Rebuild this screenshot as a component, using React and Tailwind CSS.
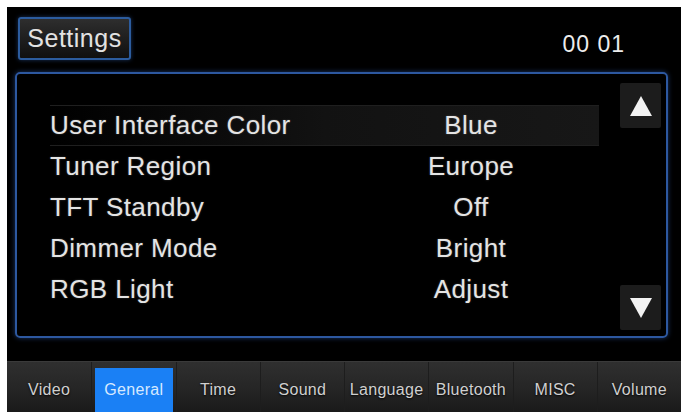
import React from "react";

const FONT = { fontFamily: '"Liberation Sans", Arial, sans-serif' };

const rows = [
  { label: "User Interface Color", value: "Blue", selected: true },
  { label: "Tuner Region", value: "Europe" },
  { label: "TFT Standby", value: "Off" },
  { label: "Dimmer Mode", value: "Bright" },
  { label: "RGB Light", value: "Adjust" },
];

const tabs = ["Video", "General", "Time", "Sound", "Language", "Bluetooth", "MISC", "Volume"];

function ScrollButton({ up }) {
  return (
    <div className="w-[41px] h-[45px] rounded-[2px] bg-[#1c1c1c] flex items-center justify-center">
      <svg width="24" height="22" viewBox="0 0 24 22">
        {up ? (
          <polygon points="12,1 23,21 1,21" fill="#f2f2f2" />
        ) : (
          <polygon points="1,1 23,1 12,21" fill="#f2f2f2" />
        )}
      </svg>
    </div>
  );
}

function SettingRow({ row }) {
  return (
    <div
      className={
        "h-[41px] flex items-center text-[26px] tracking-[0.4px] text-[#e4e4e4] " +
        (row.selected
          ? "bg-gradient-to-r from-transparent via-[#121212] to-[#171717] border-y border-[#1f1f1f]"
          : "")
      }
    >
      <div className="w-[330px] [text-shadow:0_0_2px_rgba(255,255,255,0.25)]">{row.label}</div>
      <div className="w-[182px] text-center [text-shadow:0_0_2px_rgba(255,255,255,0.25)]">{row.value}</div>
    </div>
  );
}

function TabBar({ active }) {
  return (
    <div className="h-[51px] grid grid-cols-8 bg-gradient-to-b from-[#2f2f2f] via-[#262626] to-[#1a1a1a] border-t border-[#3a3a3a]">
      {tabs.map((tab, i) => (
        <div
          key={tab}
          className={
            "flex items-end justify-center pb-0 " + (i > 0 ? "border-l border-[#1d1d1d]" : "")
          }
        >
          {tab === active ? (
            <div className="w-[78px] h-[44px] bg-[#1a80f5] flex items-center justify-center text-[16px] text-[#d6e9ff] tracking-[0.3px]">
              {tab}
            </div>
          ) : (
            <div className="h-[44px] flex items-center text-[16px] text-[#d0d0d0] tracking-[0.3px] [text-shadow:0_1px_2px_rgba(0,0,0,0.9)]">
              {tab}
            </div>
          )}
        </div>
      ))}
    </div>
  );
}

export default function App() {
  return (
    <div className="w-[687px] h-[412px] bg-white pl-[7px] pt-[7px] pr-[6px] overflow-hidden" style={FONT}>
      <div className="w-full h-full bg-black flex flex-col">
        {/* header */}
        <div className="h-[65px] flex items-start justify-between">
          <div className="ml-[11px] mt-[10px] w-[113px] h-[43px] rounded-[3px] border-2 border-[#2c5c9e] bg-gradient-to-b from-[#2e2e2e] to-[#101010] flex items-center justify-center text-[25px] tracking-[0.5px] text-[#e2e2e2] shadow-[0_0_4px_rgba(50,100,180,0.5)]">
            Settings
          </div>
          <div className="mt-[26px] mr-[56px] text-[23px] tracking-[1px] text-[#ececec] leading-none">
            00 01
          </div>
        </div>

        {/* settings panel */}
        <div className="ml-[8px] w-[653px] h-[266px] rounded-[5px] border-2 border-[#2d58a0] shadow-[0_0_5px_rgba(45,90,170,0.6)] flex pl-[33px] pr-[5px] pt-[9px] pb-[6px]">
          <div className="w-[549px] pt-[22px]">
            {rows.map((row) => (
              <SettingRow key={row.label} row={row} />
            ))}
          </div>
          <div className="ml-[21px] flex flex-col justify-between">
            <ScrollButton up />
            <ScrollButton />
          </div>
        </div>

        <div className="h-[23px]" />

        <TabBar active="General" />
      </div>
    </div>
  );
}
